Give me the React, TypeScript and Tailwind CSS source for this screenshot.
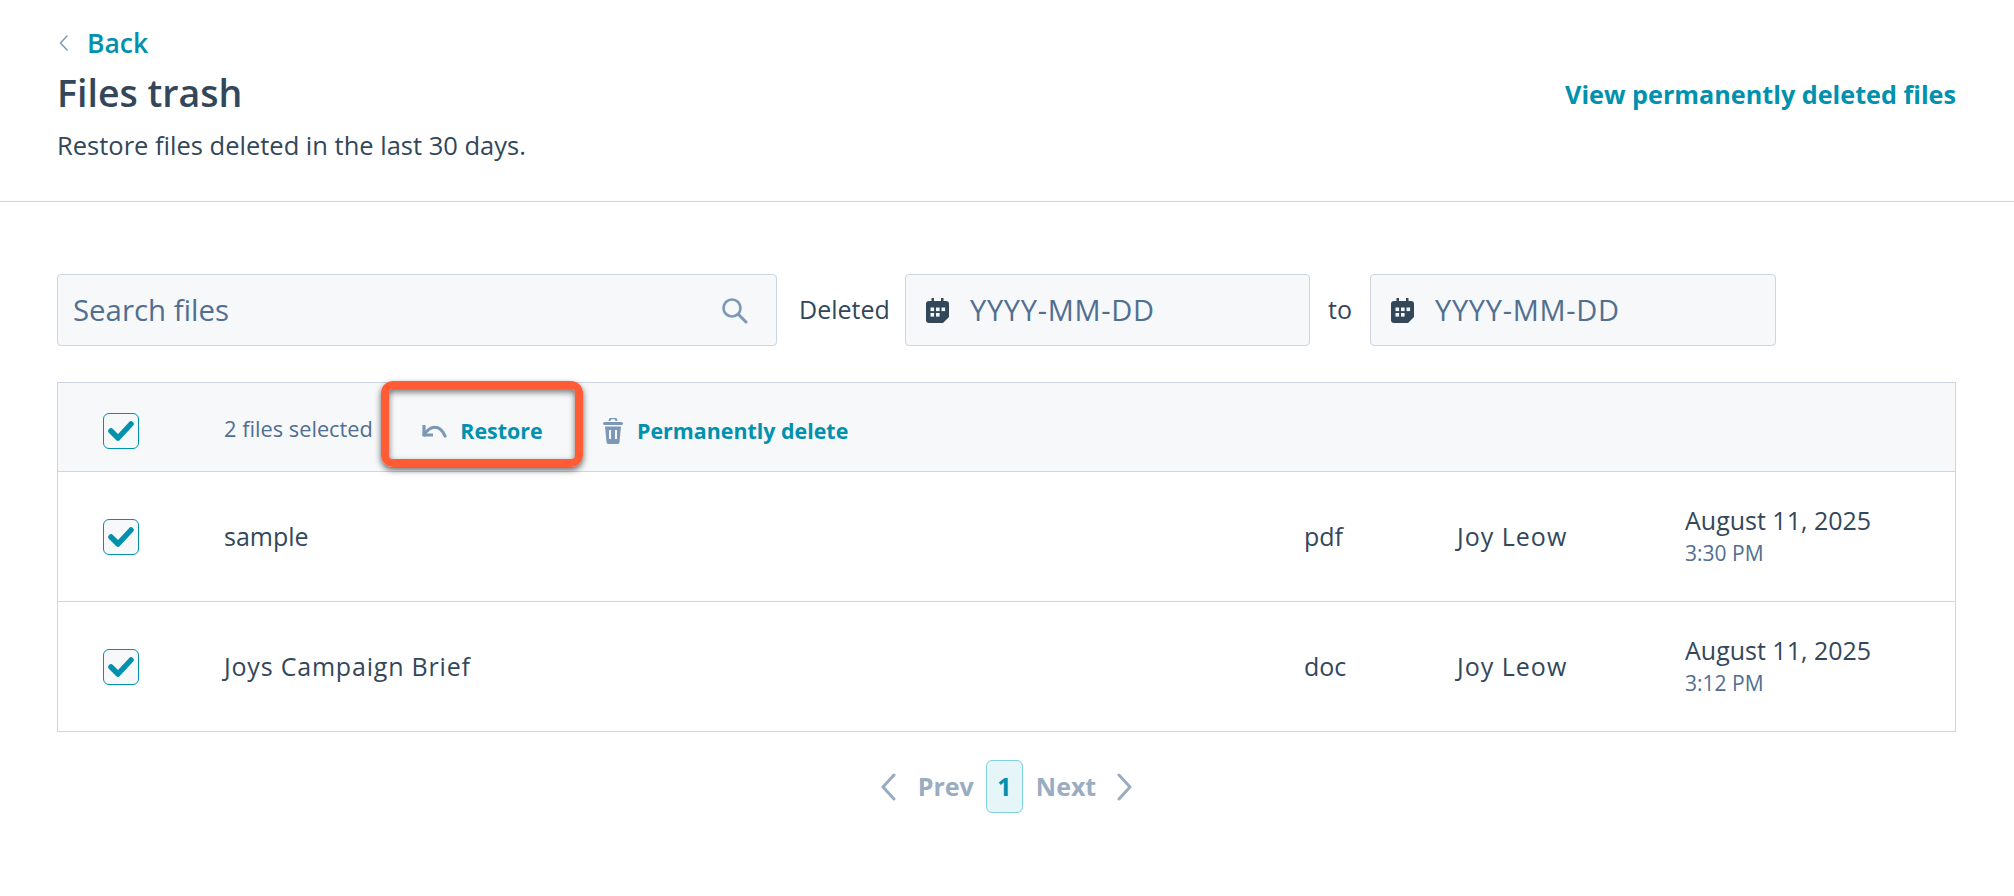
import React from "react";

function Check({ className = "" }: { className?: string }) {
  return (
    <div className={"w-[36px] h-[36px] rounded-[6px] border border-[#0091ae] bg-[#f6f8fa] flex items-center justify-center shrink-0 " + className}>
      <svg width="26" height="22" viewBox="0 0 26 22" fill="none">
        <path d="M3 11 L10 18 L23 4" stroke="#0091ae" strokeWidth="5.5" strokeLinejoin="round" strokeLinecap="round" />
      </svg>
    </div>
  );
}

function Calendar() {
  return (
    <svg width="23" height="25" viewBox="0 0 23 25" className="shrink-0">
      <path d="M5.5 0h2.5v4H5.5zM15 0h2.5v4H15z" fill="#33475b" />
      <path d="M3 3h17a3 3 0 0 1 3 3v13l-6 6H3a3 3 0 0 1-3-3V6a3 3 0 0 1 3-3z" fill="#33475b" />
      <g fill="#f6f8fa">
        <rect x="4.5" y="9.5" width="3.6" height="3.6" /><rect x="10" y="9.5" width="3.6" height="3.6" /><rect x="15.5" y="9.5" width="3.6" height="3.6" />
        <rect x="4.5" y="15" width="3.6" height="3.6" /><rect x="10" y="15" width="3.6" height="3.6" />
      </g>
    </svg>
  );
}

function DateBox({ width }: { width: string }) {
  return (
    <div className={width + " h-[72px] rounded-[4px] border border-[#cbd6e2] bg-[#f6f8fa] flex items-center pl-[20px] gap-[21px]"}>
      <Calendar />
      <span className="text-[29px] text-[#516f90] tracking-[0.7px]">YYYY-MM-DD</span>
    </div>
  );
}

function Row({ name, type, date, time, nameClass }: { name: string; type: string; date: string; time: string; nameClass: string }) {
  return (
    <div className="h-[130px] flex items-center border-b border-[#cbd6e2] text-[#33475b] text-[25px]">
      <div className="w-[166px] pl-[45px] shrink-0"><Check /></div>
      <div className={"w-[1080px] shrink-0 " + nameClass}>{name}</div>
      <div className="w-[153px] shrink-0">{type}</div>
      <div className="w-[228px] shrink-0 tracking-[1px]">Joy Leow</div>
      <div className="flex flex-col -mt-[3px]">
        <span className="leading-[36px]">{date}</span>
        <span className="text-[21px] leading-[30px] text-[#516f90]">{time}</span>
      </div>
    </div>
  );
}

export default function App() {
  return (
    <div className="w-[2014px] h-[896px] bg-white overflow-hidden font-['Open_Sans',sans-serif]">
      <header className="h-[202px] border-b border-[#cbd6e2] pl-[57px] pr-[58px] flex justify-between items-start">
        <div className="flex flex-col">
          <div className="flex items-center h-[28px] mt-[29px]">
            <svg width="9" height="16" viewBox="0 0 9 16" fill="none" className="ml-[2px]">
              <path d="M8 1 L1.5 8 L8 15" stroke="#7c98b6" strokeWidth="1.5" strokeLinecap="round" strokeLinejoin="round" />
            </svg>
            <span className="ml-[19px] text-[26.5px] leading-[28px] font-semibold text-[#0091ae]">Back</span>
          </div>
          <h1 className="mt-[16px] text-[37.5px] leading-[40px] font-semibold text-[#33475b]">Files trash</h1>
          <p className="mt-[17px] text-[25.5px] leading-[30px] text-[#33475b]">Restore files deleted in the last 30 days.</p>
        </div>
        <a className="mt-[78px] text-[25.2px] leading-[32px] font-bold text-[#0091ae]">View permanently deleted files</a>
      </header>

      <main className="px-[57px]">
        <div className="mt-[72px] flex items-center h-[72px]">
          <div className="w-[720px] h-[72px] rounded-[4px] border border-[#cbd6e2] bg-[#f6f8fa] flex items-center justify-between pl-[15px] pr-[28px]">
            <span className="text-[29.4px] text-[#516f90]">Search files</span>
            <svg width="27" height="27" viewBox="0 0 27 27" fill="none">
              <circle cx="11" cy="11" r="8.5" stroke="#7c98b6" strokeWidth="2.6" />
              <path d="M17.5 17.5 L25 25" stroke="#7c98b6" strokeWidth="3" strokeLinecap="round" />
            </svg>
          </div>
          <span className="ml-[22px] w-[106px] text-[25px] text-[#33475b]">Deleted</span>
          <DateBox width="w-[405px]" />
          <span className="ml-[18px] w-[42px] text-[25px] text-[#33475b]">to</span>
          <DateBox width="w-[406px]" />
        </div>

        <section className="mt-[36px] w-[1899px] border-l border-r border-[#cbd6e2]">
          <div className="h-[90px] border-t border-b border-[#cbd6e2] bg-[#f6f8fa] flex items-start">
            <div className="w-[166px] pl-[45px] pt-[30px] shrink-0"><Check /></div>
            <span className="mt-[31px] text-[21.8px] leading-[30px] text-[#516f90] w-[157px] shrink-0">2 files selected</span>
            <div className="relative z-10 w-[202px] h-[86px] -mt-[2px] shrink-0 flex items-center justify-center gap-[13px] pt-[14px] rounded-[12px] border-[8px] border-[#ff5c35] shadow-[0_3px_6px_rgba(0,0,0,0.6),inset_0_3px_6px_rgba(0,0,0,0.55)]">
              <svg width="26" height="16" viewBox="0 0 26 16" fill="none">
                <path d="M3 2 V12 H12" stroke="#7c98b6" strokeWidth="3.2" strokeLinejoin="round" fill="none" />
                <path d="M3 12 C9 2 19 1 24 13" stroke="#7c98b6" strokeWidth="3.2" strokeLinecap="round" fill="none" />
              </svg>
              <span className="text-[21.4px] leading-[30px] font-bold text-[#0091ae]">Restore</span>
            </div>
            <svg width="20" height="26" viewBox="0 0 20 26" className="ml-[20px] mt-[35px] shrink-0">
              <path d="M6.5 3 a3.5 3 0 0 1 7 0" stroke="#7c98b6" strokeWidth="2" fill="none" />
              <rect x="0" y="4" width="20" height="3" rx="1.5" fill="#7c98b6" />
              <path d="M2 8.5 H18 L16.5 24 a2 2 0 0 1-2 2 H5.5 a2 2 0 0 1-2-2 Z" fill="#7c98b6" />
              <path d="M7 12 V21 M13 12 V21" stroke="#f6f8fa" strokeWidth="2" />
            </svg>
            <span className="ml-[14px] mt-[33px] text-[21.4px] leading-[30px] font-bold text-[#0091ae]">Permanently delete</span>
          </div>
          <Row name="sample" nameClass="" type="pdf" date="August 11, 2025" time="3:30 PM" />
          <Row name="Joys Campaign Brief" nameClass="tracking-[0.8px]" type="doc" date="August 11, 2025" time="3:12 PM" />
        </section>

        <nav className="mt-[28px] flex items-center justify-center h-[53px] w-[1899px]">
          <svg width="15" height="28" viewBox="0 0 15 28" fill="none">
            <path d="M13 2 L2 14 L13 26" stroke="#99acc2" strokeWidth="3" strokeLinecap="round" strokeLinejoin="round" />
          </svg>
          <span className="ml-[22px] text-[25px] font-bold text-[#99acc2]">Prev</span>
          <div className="ml-[12px] w-[37px] h-[53px] rounded-[6px] border border-[#7fd1de] bg-[#e5f5f8] flex items-center justify-center text-[25px] font-bold text-[#0091ae]">1</div>
          <span className="ml-[13px] text-[25px] font-bold text-[#99acc2]">Next</span>
          <svg width="15" height="28" viewBox="0 0 15 28" fill="none" className="ml-[21px]">
            <path d="M2 2 L13 14 L2 26" stroke="#99acc2" strokeWidth="3" strokeLinecap="round" strokeLinejoin="round" />
          </svg>
        </nav>
      </main>
    </div>
  );
}
